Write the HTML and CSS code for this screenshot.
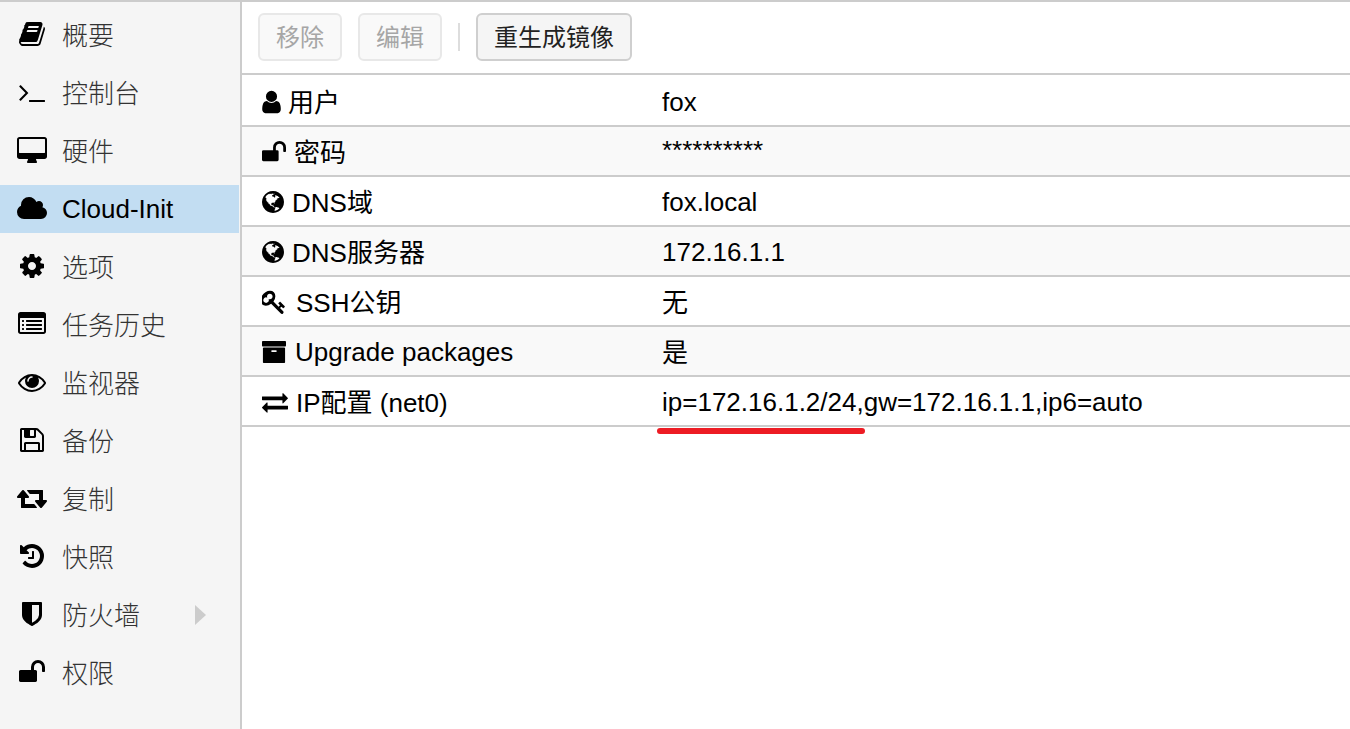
FILE: index.html
```html
<!DOCTYPE html>
<html lang="zh-CN">
<head>
    <meta charset="UTF-8">
    <meta name="viewport" content="width=device-width, initial-scale=1.0">
    <title>Cloud-Init</title>
    <link rel="stylesheet" href="styles.css">
</head>
<body>
    <!-- icon shapes, reused below -->
    <svg class="icon-defs">
        <defs>
            <path id="i-book" d="M1703 478q40 57 18 129l-275 906q-19 64-76.5 107.5t-122.5 43.5h-923q-77 0-148.5-53.5t-99.5-131.5q-24-67-2-127 0-4 3-27t4-37q1-8-3-21.5t-3-19.5q2-11 8-21t16.5-23.5 16.5-23.5q23-38 45-91.5t30-91.5q3-10 .5-30t-.5-28q3-11 17-28t17-23q21-36 42-92t25-90q1-9-2.5-32t.5-28q4-13 22-30.5t22-22.5q19-26 42.5-84.5t27.5-96.5q1-8-3-25.5t-2-26.5q2-8 9-18t18-23 17-21q8-12 16.5-30.5t15-35 16-36 19.5-32 26.5-23.5 36-11.5 47.5 5.5l-1 3q38-9 51-9h761q74 0 114 56t18 130l-274 906q-36 119-71.5 153.5t-128.5 34.5h-869q-27 0-38 15-11 16-1 43 24 70 144 70h923q29 0 56-15.5t35-41.5l300-987q7-22 5-57 38 15 59 43zm-1064 2q-4 13 2 22.5t20 9.5h608q13 0 25.5-9.5t16.5-22.5l21-64q4-13-2-22.5t-20-9.5h-608q-13 0-25.5 9.5t-16.5 22.5zm-83 256q-4 13 2 22.5t20 9.5h608q13 0 25.5-9.5t16.5-22.5l21-64q4-13-2-22.5t-20-9.5h-608q-13 0-25.5 9.5t-16.5 22.5z"/>
            <path id="i-terminal" d="M649 983l-466 466q-10 10-23 10t-23-10l-50-50q-10-10-10-23t10-23l393-393-393-393q-10-10-10-23t10-23l50-50q10-10 23-10t23 10l466 466q10 10 10 23t-10 23zm1079 457v64q0 14-9 23t-23 9h-960q-14 0-23-9t-9-23v-64q0-14 9-23t23-9h960q14 0 23 9t9 23z"/>
            <path id="i-desktop" d="M1728 992v-832q0-13-9.5-22.5t-22.5-9.5h-1600q-13 0-22.5 9.5t-9.5 22.5v832q0 13 9.5 22.5t22.5 9.5h1600q13 0 22.5-9.5t9.5-22.5zm128-832v1088q0 66-47 113t-113 47h-544q0 37 16 77.5t32 71 16 43.5q0 26-19 45t-45 19h-512q-26 0-45-19t-19-45q0-14 16-44t32-70 16-78h-544q-66 0-113-47t-47-113v-1088q0-66 47-113t113-47h1600q66 0 113 47t47 113z"/>
            <path id="i-cloud" d="M1856 1216q0 159-112.5 271.5t-271.5 112.5h-1088q-185 0-316.5-131.5t-131.5-316.5q0-132 71-241.5t187-163.5q-2-28-2-43 0-212 150-362t362-150q158 0 286.5 88t187.5 230q70-62 166-62 106 0 181 75t75 181q0 75-41 138 129 30 213 134.5t84 239.5z"/>
            <path id="i-cog" d="M1152 896q0-106-75-181t-181-75-181 75-75 181 75 181 181 75 181-75 75-181zm512-109v222q0 12-8 23t-20 13l-185 28q-19 54-39 91 35 50 107 138 10 12 10 25t-9 23q-27 37-99 108t-94 71q-12 0-26-9l-138-108q-44 23-91 38-16 136-29 186-7 28-36 28h-222q-14 0-24.5-8.5t-11.5-21.5l-28-184q-49-16-90-37l-141 107q-10 9-25 9-14 0-25-11-126-114-165-168-7-10-7-23 0-12 8-23 15-21 51-66.5t54-70.5q-27-50-41-99l-183-27q-13-2-21-12.5t-8-23.5v-222q0-12 8-23t19-13l186-28q14-46 39-92-40-57-107-138-10-12-10-24 0-10 9-23 26-36 98.5-107.5t94.5-71.5q13 0 26 10l138 107q44-23 91-38 16-136 29-186 7-28 36-28h222q14 0 24.5 8.5t11.5 21.5l28 184q49 16 90 37l142-107q9-9 24-9 13 0 25 10 129 119 165 170 7 8 7 22 0 12-8 23-15 21-51 66.5t-54 70.5q26 50 41 98l183 28q13 2 21 12.5t8 23.5z"/>
            <path id="i-list" d="M384 1184v64q0 13-9.5 22.5t-22.5 9.5h-64q-13 0-22.5-9.5t-9.5-22.5v-64q0-13 9.5-22.5t22.5-9.5h64q13 0 22.5 9.5t9.5 22.5zm0-256v64q0 13-9.5 22.5t-22.5 9.5h-64q-13 0-22.5-9.5t-9.5-22.5v-64q0-13 9.5-22.5t22.5-9.5h64q13 0 22.5 9.5t9.5 22.5zm0-256v64q0 13-9.5 22.5t-22.5 9.5h-64q-13 0-22.5-9.5t-9.5-22.5v-64q0-13 9.5-22.5t22.5-9.5h64q13 0 22.5 9.5t9.5 22.5zm1152 512v64q0 13-9.5 22.5t-22.5 9.5h-960q-13 0-22.5-9.5t-9.5-22.5v-64q0-13 9.5-22.5t22.5-9.5h960q13 0 22.5 9.5t9.5 22.5zm0-256v64q0 13-9.5 22.5t-22.5 9.5h-960q-13 0-22.5-9.5t-9.5-22.5v-64q0-13 9.5-22.5t22.5-9.5h960q13 0 22.5 9.5t9.5 22.5zm0-256v64q0 13-9.5 22.5t-22.5 9.5h-960q-13 0-22.5-9.5t-9.5-22.5v-64q0-13 9.5-22.5t22.5-9.5h960q13 0 22.5 9.5t9.5 22.5zm128 704v-832q0-13-9.5-22.5t-22.5-9.5h-1472q-13 0-22.5 9.5t-9.5 22.5v832q0 13 9.5 22.5t22.5 9.5h1472q13 0 22.5-9.5t9.5-22.5zm128-1088v1088q0 66-47 113t-113 47h-1472q-66 0-113-47t-47-113v-1088q0-66 47-113t113-47h1472q66 0 113 47t47 113z"/>
            <path id="i-eye" d="M1664 960q-152-236-381-353 61 104 61 225 0 185-131.5 316.5t-316.5 131.5-316.5-131.5-131.5-316.5q0-121 61-225-229 117-381 353 133 205 333.5 326.5t434.5 121.5 434.5-121.5 333.5-326.5zm-720-384q0-20-14-34t-34-14q-125 0-214.5 89.5t-89.5 214.5q0 20 14 34t34 14 34-14 14-34q0-86 61-147t147-61q20 0 34-14t14-34zm848 384q0 34-20 69-140 230-376.5 368.5t-499.5 138.5-499.5-139-376.5-368q-20-35-20-69t20-69q140-229 376.5-368t499.5-139 499.5 139 376.5 368q20 35 20 69z"/>
            <path id="i-floppy" d="M512 1536h768v-384h-768v384zm896 0h128v-896q0-14-10-38.5t-20-34.5l-281-281q-10-10-34-20t-39-10v416q0 40-28 68t-68 28h-576q-40 0-68-28t-28-68v-416h-128v1280h128v-416q0-40 28-68t68-28h832q40 0 68 28t28 68v416zm-384-928v-320q0-13-9.5-22.5t-22.5-9.5h-192q-13 0-22.5 9.5t-9.5 22.5v320q0 13 9.5 22.5t22.5 9.5h192q13 0 22.5-9.5t9.5-22.5zm640 32v928q0 40-28 68t-68 28h-1344q-40 0-68-28t-28-68v-1344q0-40 28-68t68-28h928q40 0 88 20t76 48l280 280q28 28 48 76t20 88z"/>
            <path id="i-retweet" d="M1216 1504q0 13-9.5 22.5t-22.5 9.5h-960q-8 0-13.5-2t-9-7-5.5-8-3-11.5-1-11.5v-600h-192q-26 0-45-19t-19-45q0-24 15-41l320-384q19-22 49-22t49 22l320 384q15 17 15 41 0 26-19 45t-45 19h-192v384h576q16 0 25 11l160 192q7 10 7 21zm640-416q0 24-15 41l-320 384q-20 23-49 23t-49-23l-320-384q-15-17-15-41 0-26 19-45t45-19h192v-384h-576q-16 0-25-12l-160-192q-7-9-7-20 0-13 9.5-22.5t22.5-9.5h960q8 0 13.5 2t9 7 5.5 8 3 11.5 1 11.5v600h192q26 0 45 19t19 45z"/>
            <path id="i-history" d="M1664 896q0 156-61 298t-164 245-245 164-298 61q-172 0-327-72.5t-264-204.5q-7-10-6.5-22.5t8.5-20.5l137-138q10-9 25-9 16 2 23 12 73 95 179 147t225 52q104 0 198.5-40.5t163.5-109.5 109.5-163.5 40.5-198.5-40.5-198.5-109.5-163.5-163.5-109.5-198.5-40.5q-98 0-188 35.5t-160 101.5l137 138q31 30 14 69-17 40-59 40h-448q-26 0-45-19t-19-45v-448q0-42 40-59 39-17 69 14l130 129q107-101 244.5-156.5t284.5-55.5q156 0 298 61t245 164 164 245 61 298zm-640-288v448q0 14-9 23t-23 9h-320q-14 0-23-9t-9-23v-64q0-14 9-23t23-9h224v-352q0-14 9-23t23-9h64q14 0 23 9t9 23z"/>
            <path id="i-shield" d="M1344 960v-640h-448v1137q119-63 213-137 235-184 235-360zm192-768v768q0 86-33.5 170.5t-83 150-118 127.5-126.5 103-121 77.5-89.5 49.5-42.5 20q-12 6-26 6t-26-6q-16-7-42.5-20t-89.5-49.5-121-77.5-126.5-103-118-127.5-83-150-33.5-170.5v-768q0-26 19-45t45-19h1152q26 0 45 19t19 45z"/>
            <path id="i-unlock" d="M1728 576v256q0 26-19 45t-45 19h-64q-26 0-45-19t-19-45v-256q0-106-75-181t-181-75-181 75-75 181v192h96q40 0 68 28t28 68v576q0 40-28 68t-68 28h-960q-40 0-68-28t-28-68v-576q0-40 28-68t68-28h672v-192q0-185 131.5-316.5t316.5-131.5 316.5 131.5 131.5 316.5z"/>
            <path id="i-user" d="M1536 1399q0 109-62.5 187t-150.5 78h-854q-88 0-150.5-78t-62.5-187q0-85 8.5-160.5t31.5-152 58.5-131 94-89 134.5-34.5q131 128 313 128t313-128q76 0 134.5 34.5t94 89 58.5 131 31.5 152 8.5 160.5zm-256-887q0 159-112.5 271.5t-271.5 112.5-271.5-112.5-112.5-271.5 112.5-271.5 271.5-112.5 271.5 112.5 112.5 271.5z"/>
            <path id="i-globe" d="M896 128q209 0 385.5 103t279.5 279.5 103 385.5-103 385.5-279.5 279.5-385.5 103-385.5-103-279.5-279.5-103-385.5 103-385.5 279.5-279.5 385.5-103zm274 521q-2 1-9.5 9.5t-13.5 9.5q2 0 4.5-5t5-11 3.5-7q6-7 22-15 14-6 52-12 34-8 51 11-2-2 9.5-13t14.5-12q3-2 15-4.5t15-7.5l2-22q-12 1-17.5-7t-6.5-21q0 2-6 8 0-7-4.5-8t-11.5 1-9 1q-10-3-15-7.5t-8-16.5-4-15q-2-5-9.5-11t-9.5-10q-1-2-2.5-5.5t-3-6.5-4-5.5-5.5-2.5-7 5-7.5 10-4.5 5q-3-2-6-1.5t-4.5 1-4.5 3-5 3.5q-3 2-8.5 3t-8.5 2q15-5-1-11-10-4-16-3 9-4 7.5-12t-8.5-14h5q-1-4-8.5-8.5t-17.5-8.5-13-6q-8-5-34-9.5t-33-.5q-5 6-4.5 10.5t4 14 3.5 12.5q1 6-5.5 13t-6.5 12q0 7 14 15.5t10 21.5q-3 8-16 16t-16 12q-5 8-1.5 18.5t10.5 16.5q2 2 1.5 4t-3.5 4.5-5.5 4-6.5 3.5l-3 2q-11 5-20.5-6t-13.5-26q-7-25-16-30-23-8-29 1-5-13-41-26-25-9-58-4 6-1 0-15-7-15-19-12 3-6 4-17.5t1-13.5q3-13 12-23 1-1 7-8.5t9.5-13.5.5-6q35 4 50-11 5-5 11.5-17t10.5-17q9-6 14-5.5t14.5 5.5 14.5 5q14 1 15.5-11t-7.5-20q12 1 3-17-4-7-8-9-12-4-27 5-8 4 2 8-1-1-9.5 10.5t-16.5 17.5-16-5q-1-1-5.5-13.5t-9.5-13.5q-8 0-16 15 3-8-11-15t-24-8q19-12-8-27-7-4-20.5-5t-19.5 4q-5 7-5.5 11.5t5 8 10.5 5.5 11.5 4 8.5 3q14 10 8 14-2 1-8.5 3.5t-11.5 4.5-6 4q-3 4 0 14t-2 14q-5-5-9-17.5t-7-16.5q7 9-25 6l-10-1q-4 0-16 2t-20.5 1-13.5-8q-4-8 0-20 1-4 4-2-4-3-11-9.5t-10-8.5q-46 15-94 41 6 1 12-1 5-2 13-6.5t10-5.5q34-14 42-7l5-5q14 16 20 25-7-4-30-1-20 6-22 12 7 12 5 18-4-3-11.5-10t-14.5-11-15-5q-16 0-22 1-146 80-235 222 7 7 12 8 4 1 5 9t2.5 11 11.5-3q9 8 3 19 1-1 44 27 19 17 21 21 3 11-10 18-1-2-9-9t-9-4q-3 5 .5 18.5t10.5 12.5q-7 0-9.5 16t-2.5 35.5-1 23.5l2 1q-3 12 5.5 34.5t21.5 19.5q-13 3 20 43 6 8 8 9 3 2 12 7.5t15 10 10 10.5q4 5 10 22.5t14 23.5q-2 6 9.5 20t10.5 23q-1 0-2.5 1t-2.5 1q3 7 15.5 14t15.5 13q1 3 2 10t3 11 8 2q2-20-24-62-15-25-17-29-3-5-5.5-15.5t-4.5-14.5q2 0 6 1.5t8.5 3.5 7.5 4 2 3q-3 7 2 17.5t12 18.5 17 19 12 13q6 6 14 19.5t0 13.5q9 0 20 10.5t17 19.5q5 8 8 26t5 24q2 7 8.5 13.5t12.5 9.5l16 8 13 7q5 2 18.5 10.5t21.5 11.5q10 4 16 4t14.5-2.5 13.5-3.5q15-2 29 15t21 21q36 19 55 11-2 1 .5 7.5t8 15.5 9 14.5 5.5 8.5q5 6 18 15t18 15q6-4 7-9-3 8 7 20t18 10q14-3 14-32-31 15-49-18 0-1-2.5-5.5t-4-8.5-2.5-8.5 0-7.5 5-3q9 0 10-3.5t-2-12.5-4-13q-1-8-11-20t-12-15q-5 9-16 8t-16-9q0 1-1.5 5.5t-1.5 6.5q-13 0-15-1 1-3 2.5-17.5t3.5-22.5q1-4 5.5-12t7.5-14.5 4-12.5-4.5-9.5-17.5-2.5q-19 1-26 20-1 3-3 10.5t-5 11.5-9 7q-7 3-24 2t-24-5q-13-8-22.5-29t-9.5-37q0-10 2.5-26.5t3-25-5.5-24.5q3-2 9-9.5t10-10.5q2-1 4.5-1.5t4.5 0 4-1.5 3-6q-1-1-4-3-3-3-4-3 7 3 28.5-1.5t27.5 1.5q15 11 22-2 0-1-2.5-9.5t-.5-13.5q5 27 29 9 3 3 15.5 5t17.5 5q3 2 7 5.5t5.5 4.5 5-.5 8.5-6.5q10 14 12 24 11 40 19 44 7 3 11 2t4.5-9.5 0-14-1.5-12.5l-1-8v-18l-1-8q-15-3-18.5-12t1.5-18.5 15-18.5q1-1 8-3.5t15.5-6.5 12.5-8q21-19 15-35 7 0 11-9-1 0-5-3t-7.5-5-4.5-2q9-5 2-16 5-3 7.5-11t7.5-10q9 12 21 2 8-8 1-16 5-7 20.5-10.5t18.5-9.5q7 2 8-2t1-12 3-12q4-5 15-9t13-5l17-11q3-4 0-4 18 2 31-11 10-11-6-20 3-6-3-9.5t-15-5.5q3-1 11.5-.5t10.5-1.5q15-10-7-16-17-5-43 12zm-163 877q206-36 351-189-3-3-12.5-4.5t-12.5-3.5q-18-7-24-8 1-7-2.5-13t-8-9-12.5-8-11-7q-2-2-7-6t-7-5.5-7.5-4.5-8.5-2-10 1l-3 1q-3 1-5.5 2.5t-5.5 3-4 3 0 2.5q-21-17-36-22-5-1-11-5.5t-10.5-7-10-1.5-11.5 7q-5 5-6 15t-2 13q-7-5 0-17.5t2-18.5q-3-6-10.5-4.5t-12 4.5-11.5 8.5-9 6.5-8.5 5.5-8.5 7.5q-3 4-6 12t-5 11q-2-4-11.5-6.5t-9.5-5.5q2 10 4 35t5 38q7 31-12 48-27 25-29 40-4 22 12 26 0 7-8 20.5t-7 21.5q0 6 2 16z"/>
            <path id="i-key" d="M832 512q0-80-56-136t-136-56-136 56-56 136q0 42 19 83-41-19-83-19-80 0-136 56t-56 136 56 136 136 56 136-56 56-136q0-42-19-83 41 19 83 19 80 0 136-56t56-136zm851 704q0 17-49 66t-66 49q-9 0-28.5-16t-36.5-33-38.5-40-24.5-26l-96 96 220 220q28 28 28 68 0 42-39 81t-81 39q-40 0-68-28l-671-671q-176 131-365 131-163 0-265.5-102.5t-102.5-265.5q0-160 95-313t248-248 313-95q163 0 265.5 102.5t102.5 265.5q0 189-131 365l355 355 96-96q-3-3-26-24.5t-40-38.5-33-36.5-16-28.5q0-17 49-66t66-49q13 0 23 10 6 6 46 44.5t82 79.5 86.5 86 73 78 28.5 41z"/>
            <path id="i-archive" d="M1088 832q0-26-19-45t-45-19h-256q-26 0-45 19t-19 45 19 45 45 19h256q26 0 45-19t19-45zm576-192v960q0 26-19 45t-45 19h-1408q-26 0-45-19t-19-45v-960q0-26 19-45t45-19h1408q26 0 45 19t19 45zm64-448v256q0 26-19 45t-45 19h-1536q-26 0-45-19t-19-45v-256q0-26 19-45t45-19h1536q26 0 45 19t19 45z"/>
            <path id="i-exchange" d="M1792 1184v192q0 13-9.5 22.5t-22.5 9.5h-1376v192q0 13-9.5 22.5t-22.5 9.5q-12 0-24-10l-319-320q-9-9-9-22 0-14 9-23l320-320q9-9 23-9 13 0 22.5 9.5t9.5 22.5v192h1376q13 0 22.5 9.5t9.5 22.5zm0-544q0 14-9 23l-320 320q-9 9-23 9-13 0-22.5-9.5t-9.5-22.5v-192h-1376q-13 0-22.5-9.5t-9.5-22.5v-192q0-13 9.5-22.5t22.5-9.5h1376v-192q0-14 9-23t23-9q12 0 24 10l319 319q9 9 9 23z"/>
        </defs>
    </svg>

    <div class="layout">
        <nav class="sidebar">
            <a class="nav-item"><svg class="nav-icon" viewBox="-64 0 1920 1792"><use href="#i-book"/></svg><span class="lift">概要</span></a>
            <a class="nav-item"><svg class="nav-icon" viewBox="-64 0 1920 1792"><use href="#i-terminal"/></svg><span class="lift">控制台</span></a>
            <a class="nav-item"><svg class="nav-icon" viewBox="-64 -64 1920 1792"><use href="#i-desktop"/></svg><span class="lift">硬件</span></a>
            <a class="nav-item active"><svg class="nav-icon" viewBox="-64 0 1920 1792"><use href="#i-cloud"/></svg><span>Cloud-Init</span></a>
            <a class="nav-item"><svg class="nav-icon" viewBox="-64 0 1920 1792"><use href="#i-cog"/></svg><span class="lift">选项</span></a>
            <a class="nav-item"><svg class="nav-icon" viewBox="-64 0 1920 1792"><use href="#i-list"/></svg><span class="lift">任务历史</span></a>
            <a class="nav-item"><svg class="nav-icon" viewBox="-64 0 1920 1792"><use href="#i-eye"/></svg><span class="lift">监视器</span></a>
            <a class="nav-item"><svg class="nav-icon" viewBox="-64 0 1920 1792"><use href="#i-floppy"/></svg><span class="lift">备份</span></a>
            <a class="nav-item"><svg class="nav-icon" viewBox="-64 0 1920 1792"><use href="#i-retweet"/></svg><span class="lift">复制</span></a>
            <a class="nav-item"><svg class="nav-icon" viewBox="-64 0 1920 1792"><use href="#i-history"/></svg><span class="lift">快照</span></a>
            <a class="nav-item"><svg class="nav-icon" viewBox="-64 0 1920 1792"><use href="#i-shield"/></svg><span class="lift">防火墙</span><span class="nav-arrow"></span></a>
            <a class="nav-item"><svg class="nav-icon" viewBox="-64 0 1920 1792"><use href="#i-unlock"/></svg><span class="lift">权限</span></a>
        </nav>

        <main class="content">
            <div class="toolbar">
                <button class="btn" disabled>移除</button>
                <button class="btn" disabled>编辑</button>
                <span class="toolbar-sep"></span>
                <button class="btn">重生成镜像</button>
            </div>

            <div class="grid">
                <div class="row">
                    <div class="key"><svg class="key-icon w-user" viewBox="256 0 1280 1792"><use href="#i-user"/></svg><span class="up">用户</span></div>
                    <div class="value down">fox</div>
                </div>
                <div class="row">
                    <div class="key"><svg class="key-icon w-unlock" viewBox="64 0 1664 1792"><use href="#i-unlock"/></svg><span class="up">密码</span></div>
                    <div class="value value-stars">**********</div>
                </div>
                <div class="row">
                    <div class="key"><svg class="key-icon w-globe" viewBox="128 0 1536 1792"><use href="#i-globe"/></svg><span class="up">DNS域</span></div>
                    <div class="value down">fox.local</div>
                </div>
                <div class="row">
                    <div class="key"><svg class="key-icon w-globe" viewBox="128 0 1536 1792"><use href="#i-globe"/></svg><span class="up">DNS服务器</span></div>
                    <div class="value down">172.16.1.1</div>
                </div>
                <div class="row">
                    <div class="key"><svg class="key-icon w-key" viewBox="109 0 1574 1792"><use href="#i-key"/></svg><span class="up">SSH公钥</span></div>
                    <div class="value up">无</div>
                </div>
                <div class="row">
                    <div class="key"><svg class="key-icon w-archive" viewBox="64 0 1664 1792"><use href="#i-archive"/></svg><span class="down">Upgrade packages</span></div>
                    <div class="value up">是</div>
                </div>
                <div class="row">
                    <div class="key"><svg class="key-icon w-exchange" viewBox="0 0 1792 1792"><use href="#i-exchange"/></svg><span class="up">IP配置 (net0)</span></div>
                    <div class="value down">ip=172.16.1.2/24,gw=172.16.1.1,ip6=auto<span class="red-mark"></span></div>
                </div>
            </div>
        </main>
    </div>
</body>
</html>
```
FILE: styles.css
```css
html, body {
    height: 100%;
}

body {
    margin: 0;
    font-family: "Liberation Sans", "Noto Sans CJK SC", sans-serif;
    font-size: 26px;
    color: #000;
    background: #fff;
    overflow: hidden;
}

.icon-defs {
    display: none;
}

.layout {
    display: flex;
    height: 100%;
    box-sizing: border-box;
    border-top: 2px solid #ccc;
}

/* left menu */
.sidebar {
    width: 242px;
    flex-shrink: 0;
    box-sizing: border-box;
    padding-top: 9px;
    background-color: #f5f5f5;
    border-right: 2px solid #ccc;
    display: flex;
    flex-direction: column;
    gap: 10px;
}

.nav-item {
    display: flex;
    align-items: center;
    height: 48px;
    width: 239px;
    padding-left: 17px;
    box-sizing: border-box;
    color: #333;
    font-weight: 300;
}

.nav-item.active {
    background-color: #c2ddf2;
    color: #000;
}

.nav-icon {
    width: 30px;
    height: 28px;
    margin-right: 15px;
    margin-bottom: 2px;
    flex-shrink: 0;
    fill: #000;
}

.lift {
    padding-bottom: 4px;
}

.nav-arrow {
    margin-left: auto;
    margin-right: 33px;
    border-left: 11px solid #ccc;
    border-top: 10px solid transparent;
    border-bottom: 10px solid transparent;
}

/* main panel */
.content {
    flex: 1;
    min-width: 0;
}

.toolbar {
    display: flex;
    align-items: center;
    gap: 16px;
    height: 73px;
    box-sizing: border-box;
    padding: 0 16px 1px;
    border-bottom: 2px solid #ccc;
}

.btn {
    height: 48px;
    padding: 0 16px 3px;
    font: inherit;
    font-size: 24px;
    color: #222;
    background-color: #f5f5f5;
    border: 2px solid #cfcfcf;
    border-radius: 6px;
}

.btn:disabled {
    color: #a6a6a6;
    background-color: #f9f9f9;
    border-color: #e8e8e8;
}

.toolbar-sep {
    width: 2px;
    height: 28px;
    background-color: #ddd;
}

.grid {
    padding-top: 2px;
}

.row {
    display: flex;
    align-items: center;
    height: 50px;
    box-sizing: border-box;
    border-bottom: 2px solid #ccc;
}

.row:nth-child(even) {
    background-color: #f9f9f9;
}

.key {
    display: flex;
    align-items: center;
    width: 420px;
    box-sizing: border-box;
    padding-left: 20px;
}

.key-icon {
    height: 26px;
    margin-top: 2px;
    margin-right: 7px;
    flex-shrink: 0;
    fill: #000;
}

.w-user { width: 19px; }
.w-unlock { width: 24px; margin-right: 8px; }
.w-globe { width: 22px; margin-right: 8px; }
.w-key { width: 23px; margin-right: 11px; }
.w-archive { width: 24px; margin-right: 9px; }
.w-exchange { width: 26px; margin-right: 8px; }

/* nudge text lines, latin and cjk sit a little apart */
.up {
    padding-bottom: 2px;
}

.down {
    padding-top: 2px;
}

.value {
    position: relative;
    white-space: nowrap;
}

.value-stars {
    margin-top: -2px;
}

/* hand drawn underline on the screenshot */
.red-mark {
    position: absolute;
    left: -5px;
    top: 43px;
    width: 208px;
    height: 6px;
    border-radius: 3px;
    background-color: #ed1c24;
}
```
